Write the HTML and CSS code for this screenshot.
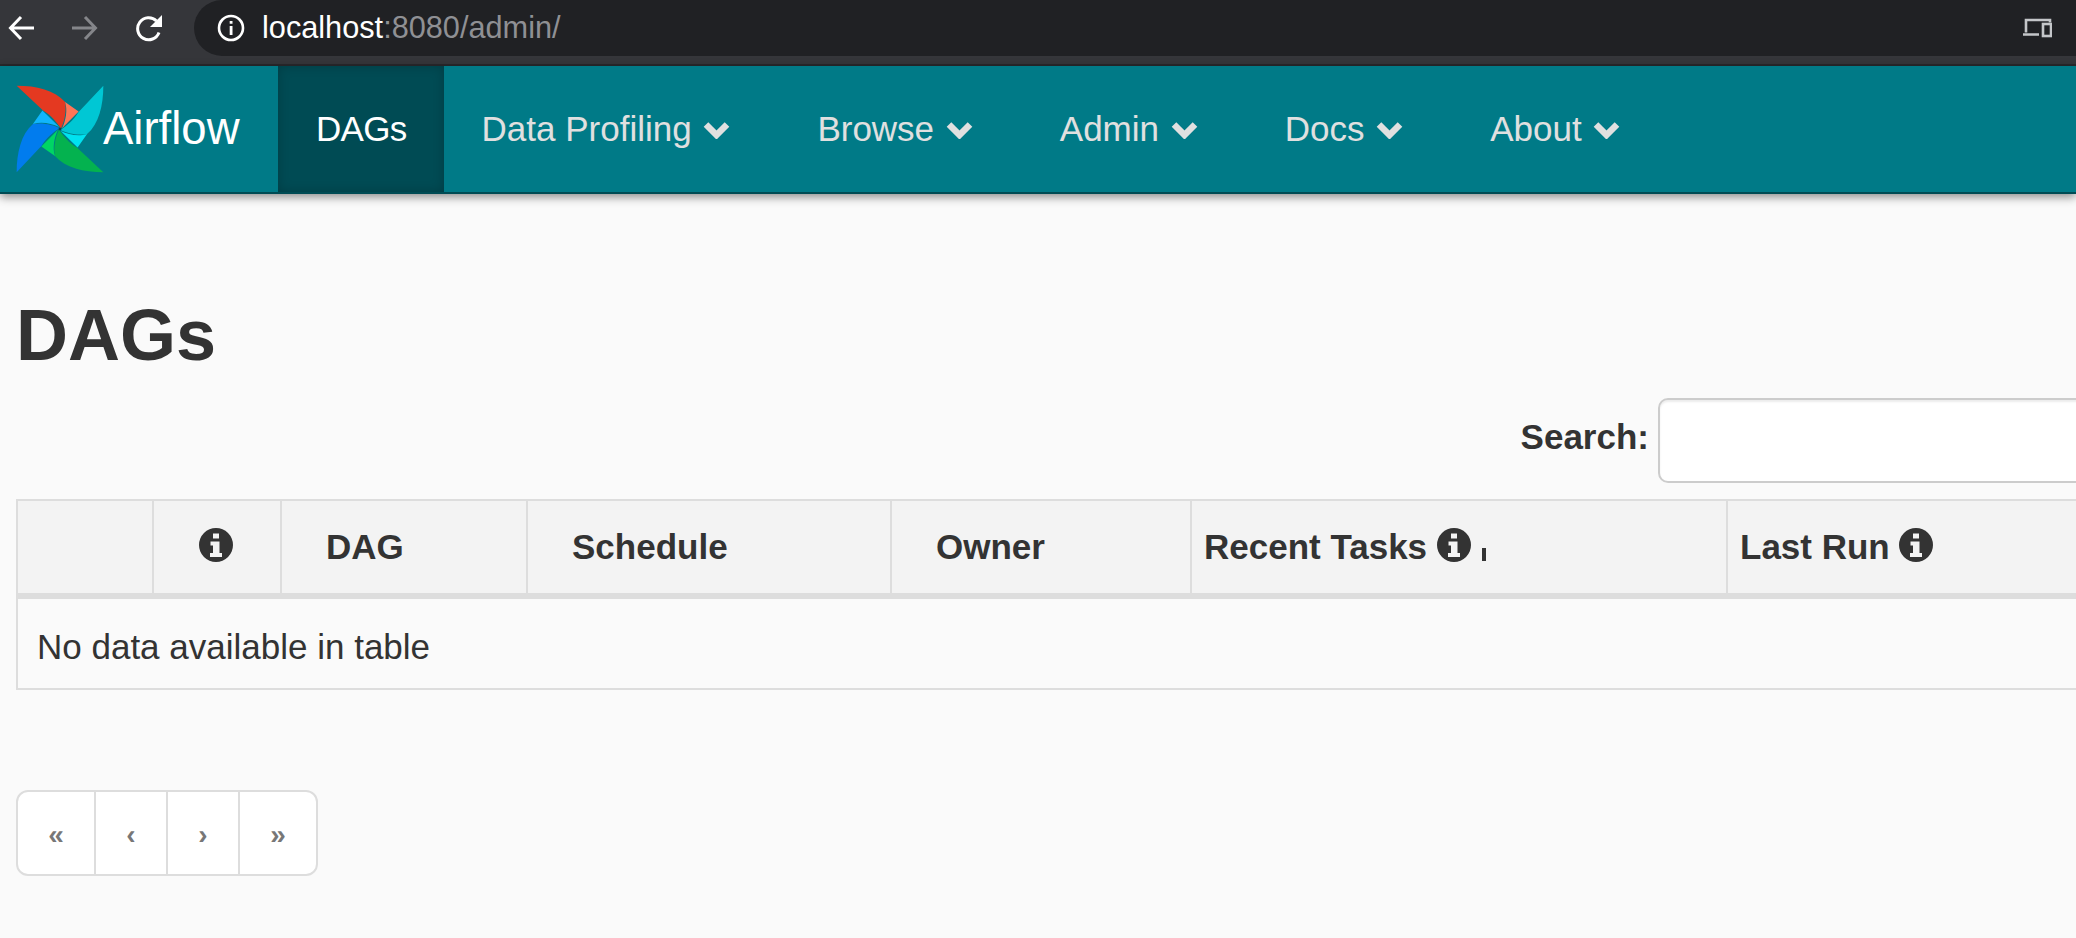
FILE: index.html
```html
<!DOCTYPE html>
<html lang="en">
<head>
    <meta charset="UTF-8">
    <title>Airflow - DAGs</title>
    <link rel="stylesheet" href="styles.css">
</head>
<body>
    <svg class="icon-defs" width="0" height="0">
        <defs>
            <symbol id="info" viewBox="0 0 34 34">
                <path fill-rule="evenodd" d="M17 0a17 17 0 1 0 0 34a17 17 0 1 0 0-34zM14 5.500h6v5h-6zM11.500 13.500h9v11.500h2.500v4h-12v-4h3v-7.500h-2.500z"/>
            </symbol>
            <symbol id="chevron" viewBox="0 0 27 19">
                <path d="M3 4.500L13.500 15L24 4.500" fill="none" stroke="currentColor" stroke-width="6.500"/>
            </symbol>
            <path id="blade-main" d="M52 52C110 52 165 65 195 100C200 130 192 160 183 178C170 160 155 140 130 125Z"/>
            <path id="blade-side" d="M195 100L235 128L186 178C197 155 203 125 195 100Z"/>
        </defs>
    </svg>

    <div class="browser-bar">
        <div class="browser-buttons">
            <svg class="browser-icon" viewBox="0 0 28 28"><path d="M27 14H4M14 3L3.500 14L14 25" fill="none" stroke="#fff" stroke-width="3"/></svg>
            <svg class="browser-icon" viewBox="0 0 28 28"><path d="M1 14H24M14 3L24.500 14L14 25" fill="none" stroke="#85868a" stroke-width="3"/></svg>
            <svg class="browser-icon" viewBox="0 0 28 28"><path d="M24 18.500A11 11 0 1 1 21.500 7" fill="none" stroke="#fff" stroke-width="3"/><path d="M27 1V13H15Z" fill="#fff"/></svg>
        </div>
        <div class="address-bar">
            <svg class="address-info" viewBox="0 0 28 28">
                <circle cx="14" cy="14" r="12" fill="none" stroke="#fff" stroke-width="2.600"/>
                <path d="M12.700 7h2.800v2.800h-2.800zM12.700 12h2.800v9h-2.800z" fill="#fff"/>
            </svg>
            <span class="address-host">localhost</span><span class="address-path">:8080/admin/</span>
            <svg class="device-icon" viewBox="0 0 30 20">
                <path d="M4 14.500V2H28V4.500M1 16.500H17" fill="none" stroke="#c4c6c9" stroke-width="2.600"/>
                <rect x="21" y="6" width="8" height="12" fill="none" stroke="#c4c6c9" stroke-width="2.600"/>
            </svg>
        </div>
    </div>

    <nav class="navbar">
        <a class="brand" href="#">
            <svg class="brand-logo" viewBox="50 50 260 260">
                <use href="#blade-main" fill="#e43921"/>
                <use href="#blade-side" fill="#ff7557"/>
                <g transform="rotate(90 180 180)">
                    <use href="#blade-main" fill="#00c7d4"/>
                    <use href="#blade-side" fill="#00e2f0"/>
                </g>
                <g transform="rotate(180 180 180)">
                    <use href="#blade-main" fill="#04b24f"/>
                    <use href="#blade-side" fill="#00d564"/>
                </g>
                <g transform="rotate(270 180 180)">
                    <use href="#blade-main" fill="#017cee"/>
                    <use href="#blade-side" fill="#11b5fc"/>
                </g>
                <circle cx="180" cy="180" r="4" fill="#1c3b48"/>
            </svg>
            <span class="brand-name">Airflow</span>
        </a>
        <a class="nav-link active" href="#">DAGs</a>
        <a class="nav-link" href="#">Data Profiling <svg class="caret"><use href="#chevron"/></svg></a>
        <a class="nav-link" href="#">Browse <svg class="caret"><use href="#chevron"/></svg></a>
        <a class="nav-link" href="#">Admin <svg class="caret"><use href="#chevron"/></svg></a>
        <a class="nav-link" href="#">Docs <svg class="caret"><use href="#chevron"/></svg></a>
        <a class="nav-link" href="#">About <svg class="caret"><use href="#chevron"/></svg></a>
    </nav>

    <div class="content">
        <h1>DAGs</h1>

        <div class="search-row">
            <label for="dag-search">Search:</label>
            <input type="text" id="dag-search">
        </div>

        <table class="dag-table">
            <colgroup>
                <col class="col-toggle">
                <col class="col-info">
                <col class="col-dag">
                <col class="col-schedule">
                <col class="col-owner">
                <col class="col-tasks">
                <col class="col-run">
            </colgroup>
            <thead>
                <tr>
                    <th></th>
                    <th class="center"><svg class="info-icon"><use href="#info"/></svg></th>
                    <th class="wide">DAG</th>
                    <th class="wide">Schedule</th>
                    <th class="wide">Owner</th>
                    <th>Recent Tasks <svg class="info-icon"><use href="#info"/></svg><span class="sort-mark"></span></th>
                    <th>Last Run <svg class="info-icon"><use href="#info"/></svg></th>
                </tr>
            </thead>
            <tbody>
                <tr>
                    <td colspan="7">No data available in table</td>
                </tr>
            </tbody>
        </table>

        <ul class="pagination">
            <li><a class="end" href="#">«</a></li>
            <li><a href="#">‹</a></li>
            <li><a href="#">›</a></li>
            <li><a class="end" href="#">»</a></li>
        </ul>
    </div>
</body>
</html>
```

FILE: styles.css
```css
html, body {
    height: 100%;
    overflow: hidden;
}

body {
    margin: 0;
    background-color: #fafafa;
    color: #333;
    font-family: "Liberation Sans", Arial, sans-serif;
    font-size: 35px;
}

a {
    color: inherit;
    text-decoration: none;
}

.icon-defs {
    display: block;
    height: 0;
}

/* browser chrome */
.browser-bar {
    display: flex;
    height: 64px;
    background-color: #35363a;
    border-bottom: 2px solid #28292c;
}

.browser-buttons {
    display: flex;
    gap: 36px;
    width: 187px;
    padding: 14px 0 0 7px;
}

.browser-icon {
    width: 28px;
    height: 28px;
}

.address-bar {
    flex-grow: 1;
    display: flex;
    align-items: center;
    height: 56px;
    padding-left: 23px;
    background-color: #202124;
    border-radius: 28px 0 0 28px;
    font-size: 30.700px;
}

.address-info {
    width: 28px;
    height: 28px;
    margin-right: 17px;
}

.address-host {
    color: #fff;
}

.address-path {
    color: #8f9094;
}

.device-icon {
    width: 30px;
    height: 20px;
    margin-left: auto;
    margin-right: 24px;
}

/* navbar */
.navbar {
    display: flex;
    height: 126px;
    background-color: #007a87;
    border-bottom: 2px solid #004b54;
    box-shadow: 0 3px 9px rgba(0, 0, 0, 0.45);
    position: relative;
}

.brand {
    display: flex;
    align-items: center;
    width: 278px;
    padding-left: 16px;
    box-sizing: border-box;
    color: #fff;
}

.brand-logo {
    width: 88px;
    height: 88px;
}

.brand-name {
    margin-left: -1px;
    font-size: 45.500px;
}

.nav-link {
    display: flex;
    align-items: center;
    padding: 0 38px;
    margin-right: 11px;
    color: #e0e0e0;
    white-space: pre;
}

.nav-link.active {
    margin-right: 0;
    padding-right: 37px;
    background-color: #004b54;
    box-shadow: inset 0 0 12px rgba(0, 0, 0, 0.2);
    color: #fff;
    letter-spacing: -0.700px;
}

.caret {
    width: 27px;
    height: 19px;
    margin-left: 2px;
}

/* page */
.content {
    width: 2484px;
    padding-left: 16px;
}

h1 {
    margin: 0;
    padding-top: 100px;
    font-size: 72px;
    line-height: 83px;
}

.search-row {
    display: flex;
    justify-content: flex-end;
    align-items: center;
    gap: 9px;
    margin-top: 21px;
}

.search-row label {
    padding-bottom: 8px;
    font-weight: bold;
}

.search-row input {
    width: 842px;
    height: 85px;
    box-sizing: border-box;
    background-color: #fff;
    border: 2px solid #ccc;
    border-radius: 10px;
    box-shadow: inset 0 2px 2px rgba(0, 0, 0, 0.075);
}

.dag-table {
    table-layout: fixed;
    border-collapse: collapse;
    width: 2484px;
    margin-top: 16px;
}

.col-toggle { width: 136px; }
.col-info { width: 128px; }
.col-dag { width: 246px; }
.col-schedule { width: 364px; }
.col-owner { width: 300px; }
.col-tasks { width: 536px; }

.dag-table th {
    height: 96px;
    box-sizing: border-box;
    padding: 0 12px;
    background-color: #f3f3f3;
    border: 2px solid #ddd;
    border-bottom-width: 6px;
    text-align: left;
    white-space: nowrap;
}

.dag-table th.center {
    padding-right: 14px;
    text-align: center;
}

.dag-table th.wide {
    padding-left: 44px;
}

.dag-table td {
    height: 93px;
    box-sizing: border-box;
    padding: 6px 19px 0;
    border: 2px solid #ddd;
}

.info-icon {
    width: 34px;
    height: 34px;
    fill: #333;
    vertical-align: -3px;
}

.sort-mark {
    display: inline-block;
    width: 4px;
    height: 13px;
    margin-left: 11px;
    background-color: #333;
    vertical-align: -2px;
}

.pagination {
    display: inline-flex;
    margin: 100px 0 0;
    padding: 0;
    list-style: none;
    background-color: #fff;
    border: 2px solid #ddd;
    border-radius: 12px;
}

.pagination li + li {
    border-left: 2px solid #ddd;
}

.pagination a {
    display: flex;
    justify-content: center;
    align-items: center;
    width: 70px;
    height: 82px;
    box-sizing: border-box;
    padding-top: 4px;
    color: #777;
    font-size: 28px;
    font-weight: bold;
}

.pagination a.end {
    width: 76px;
}
```
